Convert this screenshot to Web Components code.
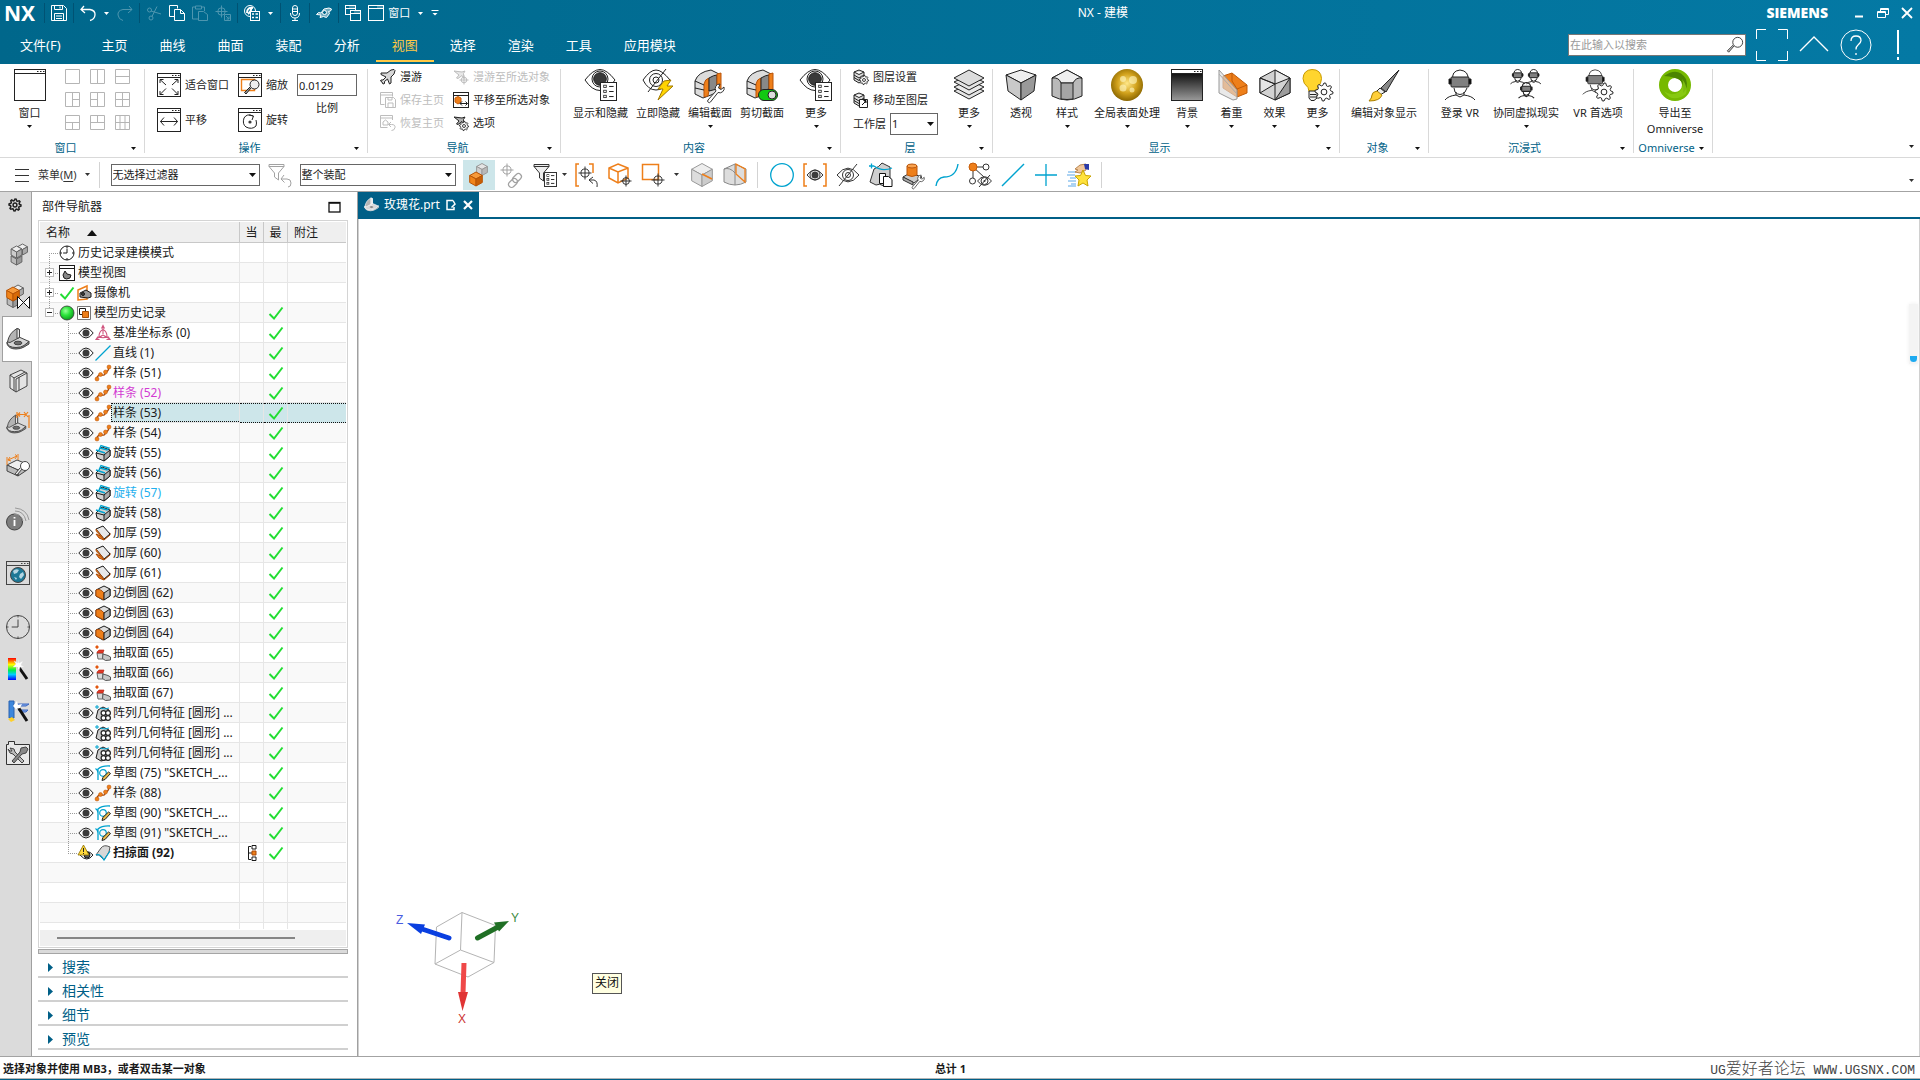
<!DOCTYPE html>
<html lang="zh-CN">
<head>
<meta charset="utf-8">
<title>NX - 建模</title>
<style>
html,body{margin:0;height:100%}
body{font:11px/16px "Noto Sans","Noto Sans CJK SC",sans-serif;color:#1a1a1a;background:#fff;overflow:hidden}
</style>
</head>
<body>
<nx-app></nx-app>
<script>
/* ---------- icon library: name -> [viewBox size, markup] ---------- */
const K='#3c3c3c', O='#ee7f1a', C='#00a3cf';
function gear(cx,cy,r,n=8,extra=''){
  let d='';
  for(let i=0;i<n*4;i++){
    const a=(i-.5)*Math.PI*2/(n*4)+Math.PI/n/4, q=(i%4<2)?r:r*.74;
    d+=(i?'L':'M')+(cx+q*Math.cos(a)).toFixed(2)+' '+(cy+q*Math.sin(a)).toFixed(2);
  }
  return `<path d="${d}Z" fill="#fff" ${extra}/><circle cx="${cx}" cy="${cy}" r="${r*.32}" fill="none" ${extra}/>`;
}
const eye=(x,y,w,r,p)=>`<path d="M${x-w} ${y}Q${x} ${y-w*1.25} ${x+w} ${y}Q${x} ${y+w*1.25} ${x-w} ${y}Z" fill="#fff"/><circle cx="${x}" cy="${y}" r="${r}" fill="none"/><circle cx="${x}" cy="${y}" r="${p}" fill="${K}" stroke="none"/>`;
const list=(x,y,w,h)=>`<rect x="${x}" y="${y}" width="${w}" height="${h}" fill="#fff"/>`+[0,1,2].map(i=>{const q=y+h*(.22+i*.28);return `<rect x="${x+w*.2}" y="${q-h*.07}" width="${w*.16}" height="${h*.13}" fill="none" stroke-width=".8"/><path d="M${x+w*.54} ${q}h${w*.28}"/>`}).join('');
const cube=(x,y,w,t='#ededed',l='#c6c6c6',r='#9f9f9f',s='#555')=>`<g stroke="${s}" stroke-linejoin="round"><path d="M${x} ${y-w}L${x+w*.9} ${y-w*.5}L${x} ${y}L${x-w*.9} ${y-w*.5}Z" fill="${t}"/><path d="M${x-w*.9} ${y-w*.5}L${x} ${y}V${y+w}L${x-w*.9} ${y+w*.5}Z" fill="${l}"/><path d="M${x+w*.9} ${y-w*.5}L${x} ${y}V${y+w}L${x+w*.9} ${y+w*.5}Z" fill="${r}"/></g>`;
const frame=(s)=>`<rect x=".5" y=".5" width="${s-1}" height="${s-1}" fill="#fff"/><path d="M0 4.5H${s}"/><path d="M${s-9} 2.5h1.5m1.5 0h1.5m1.5 0h1.5"/>`;
const cross=(x,y,r)=>`<circle cx="${x}" cy="${y}" r="${r*.62}" fill="none"/><path d="M${x-r} ${y}h${r*2}M${x} ${y-r}v${r*2}" fill="none"/>`;
const plane=`<path d="M1 4h6l4-3 3-.5 1 1L14 5l-3 3v6l-1.500 1-2-5-3 2.500v2L3 15l-1-2-1.500-1 .5-1h2L6 8 1 5.500Z" fill="currentColor" fill-opacity=".18"/>`;
const plane2=`<path d="M1 2l8 1 3-1-1.500 2.500.5 5-2-3-4 3-1.500-.5L6 6Z" fill="currentColor" fill-opacity=".35"/>`;
const wrench=`<path d="M14 31l8-9a4.500 4.500 0 0 1 4-7l-1.500 4 2.500 1.500 3-2.500a4.500 4.500 0 0 1-6 5.500l-7.500 9.500a1.600 1.600 0 0 1-2.500-2Z" fill="#fff" stroke="#333"/>`;
const section=`<path d="M1 12Q4 3 17 1l8 4v17l-8 4-8 3-8-4Z" fill="#dcdcdc"/><path d="M10 28V15q1-5 5-6v12l-1 6Z" fill="${O}" stroke="#b9550a"/><path d="M15 9q5-3 8-3v14l-8 2Z" fill="#888"/><path d="M23 5l4-1v16l-4 3Z" fill="${O}" stroke="#b9550a"/><path d="M1 12l9 4m-9 3l9 2" fill="none"/>`;
const flange=`<path d="M1 15v2q2 5 9 5 5 0 8-2l5-3v-3l-5 4q-8 5-14 0Z" fill="#8a8a8a"/><path d="M3 14L13 10l10 4.500-5 4q-3 2-8 2-8 0-9-5Z" fill="#d6d6d6"/><path d="M1.500 15Q3 6 11 1.500l2.500 1V10.500L4 15.500Z" fill="#b4b4b4"/><path d="M11 1.500l2.500 1V10.500L11 11.500Z" fill="#e4e4e4"/><ellipse cx="12" cy="16" rx="4" ry="1.800" fill="#6d6d6d"/>`;
const vr=`<path d="M9 11Q7 2 16 1q9 1 8 10" fill="none"/><path d="M10 19l1 4q5 5 10 0l2-4" fill="none"/><path d="M12 23v3q-8 1-11 5M20 23v3q8 1 11 5M12 26l4 2 4-2" fill="none"/><rect x="7" y="8" width="18" height="10" rx="1" fill="#808080"/><path d="M5 10h2v5H5zM25 10h2v5h-2z"/>`;
const clockF=(c,r)=>`<circle cx="${c}" cy="${c}" r="${r}" fill="none"/><path d="M${c} ${c-r*.65}V${c}H${c-r*.55}" fill="none"/><path d="M${c} ${c-r}v2M${c} ${c+r}v-2M${c-r} ${c}h2M${c+r} ${c}h-2"/>`;
const winS=(x,y,w,h)=>`<rect x="${x}" y="${y}" width="${w}" height="${h}" fill="none"/><path d="M${x} ${y+3}h${w}"/><path d="M${x+w-6} ${y+1.500}h1m1 0h1m1 0h1"/>`;
const stack=`<path d="M16 15l15 7-15 8-15-8z" fill="#e4e4e4"/><path d="M16 11l15 7-15 8-15-8z" fill="#e9e9e9"/><path d="M16 6l15 7-15 8-15-8z" fill="#e4e4e4"/><path d="M16 1l15 8-15 8L1 9z" fill="#dcdcdc"/>`;
const stackS=`<path d="M6 1l5 2-5 2.500L1 3zM1 3v8l5 3 5-3V3M1 6l5 3 5-3M1 8.500l5 3 5-3" fill="#ddd"/>`;
const chain=`<g fill="none" stroke-width="1.200"><rect x="12" y="12" width="10" height="6" rx="3" transform="rotate(-45 17 15)"/><rect x="8" y="17" width="10" height="6" rx="3" transform="rotate(-45 13 20)"/></g>`;
const rolled=`<path d="M1 19L5 6q5-2 8-6l8 4v13l-6 6q-5-3-8-1Z" fill="#cfcfcf"/>`;
const I={
save:[16,`<path d="M.5.500h12l3 3v12H.5zM3.500.500v4h8v-4M3.500 15.500v-7h9v7M5 11h6M5 13.500h6M9 1.500v2" fill="none"/>`],
undo:[16,`<path d="M4 1L1 4.500 5 8M1 4.500h9q5.500 1 5 5.500T10 15.500" fill="none" stroke-width="1.300"/>`],
redo:[16,`<path d="M12 1l3 3.500L11 8M15 4.500H6Q.5 5.500 1 10t5 5.500" fill="none"/>`],
cut:[16,`<circle cx="3.500" cy="5" r="2" fill="none"/><circle cx="5" cy="13" r="2" fill="none"/><path d="M5 6l10 3M6 11.500l5-10" fill="none"/>`],
copy:[16,`<path d="M.5.500h8v3M.5.500v11h5M5.500 4.500h6l4 4v7h-10zM11.500 4.500v4h4" fill="none"/>`],
paste:[16,`<path d="M3 2H.5v12H6M10 2h2.500v4M3.500 1h6v3h-6zM6.500 6.500h5l4 3v6h-9z" fill="none"/>`],
move:[16,`${cross(6.5,6.5,6)}<path d="M9.500 9.500h6v6h-6zM11 11l3 3m0-2.500V14h-2.500" fill="none"/>`],
disp:[16,`<circle cx="6" cy="6" r="5.500" fill="none"/><path d="M3 8q0-6 6-5M4 9q4-3 3-7" fill="none" stroke-width="2"/><rect x="6.500" y="6.500" width="9" height="9" fill="#00678b"/><path d="M8 9h2M8 12.500h2M11.500 9H14M11.500 12.500H14" stroke-width="1.500"/>`],
mic:[16,`<rect x="5.500" y=".5" width="5" height="10" rx="2.500" fill="none"/><path d="M6 4h4M6 6.500h4M3.500 8q0 5 4.500 5t4.500-5M8 13v2.500M5 15.500h6" fill="none"/>`],
hand:[16,`<path d="M.5 9.500l2-2 2.500.5 3-4 5-1 2.500 1-1 2-2 .5 1 2-3 4-3-1-3.500 1 1-2.500z" fill="currentColor" fill-opacity=".45"/><circle cx="8.500" cy="7.500" r="2" fill="#00678b"/>`],
wins:[16,`${winS(.5,.5,10,9)}<rect x="5.500" y="5.500" width="10" height="10" fill="#00678b"/>${winS(5.5,5.5,10,10)}`],
win:[16,`${winS(.5,.5,15,15)}`],
cust:[8,`<path d="M.5 1.500h7"/><path d="M1.500 4h5L4 6.500z" fill="currentColor" stroke="none"/>`],
min:[14,`<path d="M3 10.500h8" stroke-width="2"/>`],
restore:[14,`<path d="M4.500 5V2.500h8v6H10M1.500 5.500h8v6h-8zM1.500 6.500h8M4.500 3.500h8" fill="none"/>`],
close:[14,`<path d="M2 2l10 10M12 2L2 12" stroke-width="1.800"/>`],
brackets:[32,`<path d="M10 .5H.5V10M22 .5h9.500V10M.5 22v9.500H10M31.500 22v9.500H22" fill="none"/>`],
chevup:[32,`<path d="M2 22L16 8l14 14" fill="none" stroke-width="1.400"/>`],
help:[32,`<circle cx="16" cy="16" r="15" fill="none"/><path d="M11 12q0-5 5-5t5 4.500q0 2-3 4.500-2 1.500-2 4.500M16 24v2" fill="none" stroke-width="1.300"/>`],
bang:[32,`<path d="M16 1v24M16 28v3" stroke-width="2"/>`],
mag:[20,`<circle cx="13" cy="7" r="5.500" fill="none"/><path d="M9 11l-6 7-1.500-1.500L8 10" fill="#ccc"/>`],
bigwin:[32,`<rect x=".5" y=".5" width="31" height="31" fill="#fff"/><path d="M0 4.500h32M23 2.500h1.500m1.500 0h1.500m1.500 0h1.500"/>`],
fit:[24,`${frame(24)}<path d="M9 12L3 6.500v3.500m0-3.500h3.500M15 12l6-5.500V10m0-3.500h-3.500M9 15.500L3 21.500V18m0 3.500h3.500M15 15.500l6 6V18m0 3.500h-3.500" fill="none"/>`],
zoom:[24,`${frame(24)}<path d="M3.500 6.500h13v11h-13z" fill="none" stroke="${O}" stroke-width="1.400"/><circle cx="16.500" cy="11.500" r="4.500" fill="#eee"/><path d="M13 15l-5 6-1.500-1.500L12 14" fill="#999"/>`],
pan:[24,`${frame(24)}<path d="M3.500 13.500h17M7 9.500l-3.500 4L7 17.500M17 9.500l3.500 4-3.500 4" fill="none"/>`],
rot:[24,`${frame(24)}<path d="M15 8q-6-3-9 2-2 6 2 9 6 3 10-1 1-3 0-6M11 7l4.500 1L14 12" fill="none"/><circle cx="12" cy="14" r="1.600" fill="${K}" stroke="none"/>`],
plane:[16,plane],
planesel:[16,plane2+cross(11,11,4.5)],
saveview:[16,`<path d="M.5.500h12v4M.5.500v12h4M.5 3h12M5.500 5.500h8l2 2v8h-10zM8 15v-4h5v4M8 5.500v2.500h4V5.500" fill="none"/>`],
restview:[16,`<path d="M12.500 5V.500H.5v12h7M.5 3h12M3 10V7l2.500-2L8 7v3zM11 7L8.500 9.500 11 12M8.500 9.500h3q4 0 3.500 3t-3.500 3" fill="none"/>`],
pansel:[16,`<rect x=".5" y=".5" width="15" height="15" fill="#fff"/><path d="M0 3.500h16"/><path d="M5 4.500l3 1.500v4l-3 2-3-2V6z" fill="${O}" stroke="#c75d0a"/><path d="M7 11.500h7.500M9 9.500l-2 2 2 2M12.500 9.500l2 2-2 2" fill="none"/>`],
navopt:[16,plane2+gear(11,11,4.6,8,'stroke-width=".9"')],
showhide:[32,`<path d="M0 11Q8 .5 15 .5T30 11Q23 21.500 15 21.500T0 11Z" fill="#fff"/><circle cx="15" cy="10" r="8" fill="none"/><circle cx="15" cy="10" r="6.300" fill="#3a3a3a"/>${list(15.5,13.5,16,18)}`],
hidebolt:[32,`<path d="M1 11Q8 1 14 1t14 10Q22 21 14 21T1 11Z" fill="#fff"/><circle cx="14" cy="11" r="6.500" fill="none"/><circle cx="14" cy="11" r="3" fill="none"/><path d="M24 0L6 23"/><path d="M22 12l7-1-4 6h6L16 31l5-11h-5z" fill="#ffd400" stroke="#a07800"/>`],
editsec:[32,section+wrench],
clipsec:[32,section+`<rect x="12.500" y="20.500" width="19" height="11" rx="5.500" fill="#12c812" stroke="#222"/><circle cx="26" cy="26" r="4" fill="#ddd" stroke="#222"/>`],
layerset:[16,stackS+gear(11,11,4.6,8,'stroke-width=".9"')],
layermove:[16,stackS+`<path d="M6.500 7.500h8v8h-8z" fill="#fff"/><path d="M9 13l4-4m-2.500-.5H13V11" stroke="#111"/>`],
layers:[32,stack],
persp:[32,`<path d="M16 1l15 5-15 8L1 6z" fill="#efefef"/><path d="M1 6l15 8v17L3 22z" fill="#c9c9c9"/><path d="M31 6l-15 8v17l13-9z" fill="#999"/>`],
style:[32,`<path d="M1 9L16 1l15 8v18q-15 8-30 0z" fill="#b9b9b9"/><path d="M1 9L16 1l15 8q-6-1-9 5H10Q8 8 1 9z" fill="#efefef"/><path d="M10 14v16q6 1 12 0V14z" fill="#a5a5a5"/>`],
gold:[32,`<defs><radialGradient id="g" cx=".5" cy=".45" r=".55"><stop offset="0" stop-color="#ffe88a"/><stop offset=".55" stop-color="#d2a21c"/><stop offset="1" stop-color="#8a6600"/></radialGradient></defs><circle cx="16" cy="16" r="16" fill="url(#g)" stroke="none"/><g fill="#fff5bb" stroke="none" opacity=".65"><circle cx="12" cy="10" r="3"/><circle cx="22" cy="11" r="4"/><circle cx="12" cy="19" r="3.500"/><circle cx="21" cy="21" r="2.500"/></g>`],
bg:[32,`<defs><linearGradient id="g" x2="0" y2="1"><stop offset="0" stop-color="#111"/><stop offset="1" stop-color="#9a9a9a"/></linearGradient></defs><rect x=".5" y=".5" width="31" height="31" fill="#fff"/><rect x=".5" y="4.500" width="31" height="27" fill="url(#g)"/><path d="M23 2.500h1.500m1.500 0h1.500m1.500 0h1.500"/>`],
emph:[32,`<path d="M7 7l9-3 15 12v8l-10 4L7 19z" fill="${O}" stroke="#bf5a08"/><path d="M16 4v8l5 8 10-4M21 20v8" fill="none" stroke="#bf5a08"/><path d="M3 1l18 20v9l-4 1L3 24z" fill="#ddd" fill-opacity=".65" stroke="#999"/><path d="M3 5l18 20" stroke="#aaa"/>`],
effect:[32,`<path d="M16 1l15 8v15l-15 7-15-7V9z" fill="#d2d2d2"/><path d="M16 1v14l15-6zM16 15L1 24V9z" fill="#e6e6e6"/><path d="M31 9v15l-15 7z" fill="#9d9d9d"/><path d="M16 15L1 9M16 31V15" fill="none"/>`],
bulb:[32,`<path d="M10 .5q9 0 9.500 9 0 5-4 9l-1 4H7l-1-4q-5-4-5-9 .5-8.500 9-9z" fill="#ffd52e" stroke="#c99a00"/><path d="M7 22h8v7l-3 2.500H9L7 29zM8 25.500h6M8 28h6" fill="#eee"/>${gear(22,23,9,8)}`],
brush:[32,`<path d="M31 1L18 23l-5-4z" fill="#888"/><path d="M12 19l5 4-5 3-4-3z" fill="#eee"/><path d="M9 22l5 4q-2 6-13 6 3-3 3-6t5-4z" fill="#ffcf3a" stroke="#a87e00"/>`],
vr:[32,vr],
vrs:[32,`<g transform="scale(.48)" stroke-width="2">${vr}</g><g transform="translate(16) scale(.48)" stroke-width="2">${vr}</g><g transform="translate(8 13) scale(.52)" stroke-width="2">${vr}</g>`],
vrgear:[32,`<g transform="scale(.82)">${vr}</g>${gear(22,23,9,8)}`],
omni:[32,`<circle cx="16" cy="16" r="11.500" fill="none" stroke="#76b900" stroke-width="9"/><path d="M5 7q14-10 22 3 3 9-3 14 2-13-8-15-6-2-11-2z" fill="#4c8500" stroke="none"/><path d="M27 25q-14 10-22-3 7 6 15 1 6-5 3-13 6 7 4 15z" fill="#8fd016" stroke="none" opacity=".7"/>`],
burger:[16,`<path d="M1 2.500h14M1 8.500h14M1 14.500h14"/>`],
filtundo:[24,`<path d="M1 1.500h15v2L10.500 10v7l-4-3v-4L1 3.500zM1 3.500h15M16 12l-3 4 3.500 3.500M13 16h6q4 0 4 4t-3 4" fill="none"/>`],
asm:[24,`${cube(15,6.500,6,'#e4e4e4','#cfcfcf','#b9b9b9','#999')}${cube(9,16,7,'#f79a3a','#f08419','#c85f05','#b85406')}`],
link:[24,cross(7,7,6.5)+chain],
filtlist:[24,`<path d="M1 1.500h15v2L10.500 10v8l-4-3v-5L1 3.500zM1 3.500h15" fill="#eee"/>${list(11.5,9.5,12,14)}`],
selundo:[24,`<path d="M4 1H1v22h3M14 1h4v9" fill="none" stroke="${O}" stroke-width="1.500"/>${cross(10,10,6.5)}<path d="M18 14l-4 3 4 3.500M14 17h5q4 1 3 7" fill="none"/>`],
cubesel:[24,`<path d="M10 1l10 4v10l-10 5L1 15V5zM1 5l9 4 10-4M10 9v11" fill="none" stroke="${O}" stroke-width="1.500"/>${cross(18,18,5.5)}`],
rectsel:[24,`<path d="M1.500 1.500h16v15h-16z" fill="none" stroke="${O}" stroke-width="1.500"/>${cross(17,17,6.5)}`],
cubea:[24,cube(12,12,11.500,'#eee','#ddd','#ccc','#999')+`<path d="M12 11l10 5" stroke="${O}" stroke-width="1.700"/>`],
cubeb:[24,`<path d="M1 6L12 1l11 5v13q-11 6-22 0z" fill="#ddd" stroke="#888"/><path d="M1 6q6-2 11 4v12M12 10V1" fill="none" stroke="#888"/><path d="M13 1v10l9 8V6z" fill="none" stroke="${O}" stroke-width="1.300"/>`],
circle:[24,`<circle cx="12" cy="12" r="11.300" fill="none" stroke="${C}" stroke-width="1.300"/>`],
eyebr:[24,`<path d="M4 1H1v22h3M20 1h3v22h-3" fill="none" stroke="${O}" stroke-width="1.500"/>${eye(12,12,8,5,3.500)}`],
eyeoff:[24,`${eye(12,12,11,5.500,0)}<circle cx="12" cy="12" r="2.500" fill="none"/><path d="M21 1L3 23"/>`],
rollcopy:[24,rolled+`<path d="M5 3q8 6 18 2M0 3h5M2.500.500v5" fill="none" stroke="${C}" stroke-width="1.300"/><path d="M10.500 10.500h6v10h-6z" fill="#fff" stroke="#111"/><path d="M14.500 13.500h5l3.500 3v7h-8.500z" fill="#fff" stroke="#111"/>`],
cylwr:[24,`<path d="M1 14l7-4 12 4-8 6z" fill="#ccc"/><path d="M1 14v3l10 5v-3z" fill="#aaa"/><path d="M5 3v9q5 3 10 0V3z" fill="${O}" stroke="#b9550a"/><ellipse cx="10" cy="3" rx="5" ry="2" fill="#f9a24e" stroke="#b9550a"/><g transform="translate(0 1) scale(.74)">${wrench}</g>`],
curve:[24,`<path d="M1 23q1-8 8-9 12 0 14-13" fill="none" stroke="${C}" stroke-width="1.400"/>`],
treehide:[24,`<path d="M5 4l11 10M5 4h13M5 4v13" fill="none"/><circle cx="5" cy="4" r="4" fill="${O}" stroke="#c75d0a"/><circle cx="18" cy="4" r="3" fill="#fff"/><circle cx="4.500" cy="18" r="3" fill="#fff"/>${eye(16.500,18,7,3.500,1)}<path d="M22 12L11 24"/>`],
line:[24,`<path d="M23 1L1 23" stroke="${C}" stroke-width="1.400"/>`],
plus:[24,`<path d="M12 1v22M1 12h22" stroke="${C}" stroke-width="1.300"/>`],
star:[24,`<path d="M1 9h8M0 12h8M3 15h6M1 18h8M4 21h5M1 23h8" stroke="#5aa7e8"/><path d="M8 6l5-4 6-1v6l-6 3-5-1 3-2z" fill="#f1c79a" stroke="#b98650"/><path d="M17 1l5 0v6l-4-1z" fill="#2a3aa8" stroke="none"/><path d="M16 7l2.500 5.500 5.500.5-4 4 1 6-5-3-5 3 1-6-4-4 5.500-.5z" fill="#ffe23c" stroke="#c9a400"/>`],
gear:[14,`${gear(7,7,6,8,'stroke="#222" stroke-width="1.500"').replace('fill="#fff"','fill="none"')}`],
rasm:[24,cube(16.500,6.500,5.500,'#eee','#ccc','#aaa','#666')+cube(10.500,16,6,'#ddd','#bbb','#999','#666')+cube(10.500,9,6,'#eee','#ccc','#aaa','#666')],
rcon:[24,cube(12,6,6,'#eee','#ccc','#aaa','#666')+cube(7,16,6.500,'#ddd','#bbb','#999','#666')+cube(7,9,7,'#f79a3a','#f08419','#d86a08','#b85406')+`<path d="M11.500 11.500v12l12-12v12z" fill="#fff" stroke="#111"/>`],
flange:[24,flange],
books:[24,`<path d="M4 6l11-5 6 3v13L10 23l-6-4z" fill="#e4e4e4"/><path d="M4 6l4 3v13M10 10v13M8 9l11-6M10 10l11-6M13 8v13" fill="none"/>`],
rpmi:[24,`<g transform="translate(0 3) scale(.86)">${flange}</g><path d="M11 1v6M23 4v13M12 3.500h8M14 1.500l-2 2 2 2M18 1l4 5M22 1l-4 5" fill="none" stroke="${O}" stroke-width="1.200"/>`],
rmeas:[24,`<path d="M1 12l10-5 10 4-9 6z" fill="#eee"/><path d="M1 12v6l11 5v-6zM21 11v6l-9 6v-6z" fill="#bbb"/><path d="M1 4v8M12 1v6M2 7l9-4M4 4L2 7l3 1M9 1.500l2 1.500-2 3" fill="none" stroke="${O}"/><circle cx="19" cy="13" r="4.500" fill="#fff"/><path d="M16 16l-5 6-2-1 5-6" fill="#eee"/>`],
rinfo:[24,`<circle cx="8.500" cy="15" r="8" fill="#7d7d7d"/><path d="M8.500 13v6M8.500 10v1.500" stroke="#fff" stroke-width="1.800"/><path d="M9 4q9 0 11 10M9 1q12 1 14 12M8 7q7 0 9 7" fill="none" stroke="#999"/>`],
rweb:[24,`${frame(24).replace('fill="#fff"','fill="none"')}<circle cx="12" cy="14" r="7.500" fill="#1d7896"/><path d="M7 10q3-3 6-1l-2 3-3 1zM14 13l3-2 1 3-3 4-2-2zM8 16l3 1-1 2z" fill="#b5d6e2" stroke="none"/>`],
clock:[24,clockF(12,11.500)],
rwand:[24,`<defs><linearGradient id="g" x2="0" y2="1"><stop offset="0" stop-color="#f00"/><stop offset=".3" stop-color="#ff0"/><stop offset=".55" stop-color="#0e4"/><stop offset=".75" stop-color="#0cf"/><stop offset="1" stop-color="#00f"/></linearGradient></defs><rect x="2" y="1" width="8" height="22" fill="url(#g)" stroke="none"/><path d="M12 9l9 13" stroke="#111" stroke-width="3"/><path d="M12 2l1 4 4-2-2 4 3 2-4 0-1 4-2-4-4 0 3-3-2-3 4 2z" fill="#fff" stroke="#ddd" stroke-width=".4"/>`],
rwand2:[24,`<path d="M3 2h5v17H3z" fill="#3d87dc" stroke="#2a62b0"/><path d="M10 5h13l-3 2h-7M12 11h10l-2 2h-6" fill="#7fa8ea" stroke="#3d66c0"/><path d="M2 20l4-2 3 3-4 2z" fill="#ffd02a" stroke="none"/><path d="M12 8l9 14" stroke="#111" stroke-width="3"/><path d="M11 2l1 4 4-1-2 4-4 1-3-3z" fill="#fff" stroke="none"/>`],
rtools:[24,`<path d="M.5 3.500h2v-3h6v3h15v20H.5z" fill="#e8e8e8" stroke="#333"/><path d="M4 7l4 1 1 3 9 9-2 2-9-9-3-1-2-4 2 2h2z" fill="#bbb"/><path d="M20 6l-5 1-1 4-8 9 2 2 8-9 4-1 2-4z" fill="#888"/>`],
tclock:[16,clockF(8,7)],
tview:[16,`<rect x=".5" y=".5" width="15" height="15" fill="#fff"/><path d="M0 3.500h16"/><path d="M4 10l2-4 2 3 4 1-1 3q-4 2-6 0z" fill="#888"/>`],
tcam:[16,`<path d="M2 5l9-4v13l-9 1z" fill="none" stroke="${O}" stroke-width="1.500"/><path d="M4 8l6-3 5 3v4l-3 1-8-1z" fill="#999"/><circle cx="7" cy="9" r="1.500" fill="#444"/>`],
tcheck:[16,`<path d="M1.500 9l4.500 4.500L14.500 2.500" fill="none" stroke="#22dd33" stroke-width="2"/>`],
tball:[16,`<defs><radialGradient id="g" cx=".4" cy=".35" r=".65"><stop offset="0" stop-color="#9f9"/><stop offset=".5" stop-color="#2be33a"/><stop offset="1" stop-color="#0fa01f"/></radialGradient></defs><circle cx="8" cy="8" r="7" fill="url(#g)" stroke="#333" stroke-width=".8"/>`],
thist:[16,`<path d="M1.500 1.500h13v13h-13z" fill="#fff" stroke="#777"/><path d="M3.500 3.500h6v6h-6z" fill="#fff"/><path d="M6.500 6.500h6v6h-6z" fill="${O}" stroke="#a74d04"/>`],
eye:[16,`<path d="M.8 8Q8-2 15.200 8 8 18 .8 8Z" fill="#fff"/><circle cx="8" cy="8" r="3.500" fill="#3a3a3a" stroke="none"/>`],
tcsys:[16,`<path d="M8 1v8M8 10L2 13.500M8 10l6 3.500M6.500 3.500L8 .5l1.500 3M3 11.500l-2 3h3.500M13 11.500l2 3h-3.500M8 4.500q4 2 4 7-4 2.500-8 0 0-5 4-7" fill="none" stroke="#d0557f" stroke-width="1.100"/>`],
tline:[16,`<path d="M15.500.5L.5 15.500" stroke="${C}" stroke-width="1.300"/>`],
tspl:[16,`<path d="M2 14q0-4 4-4 5 1 4-3 4 0 4-6" fill="none" stroke="#a8480a" stroke-width="1.300"/><g fill="${O}" stroke="#b9550a" stroke-width=".5"><circle cx="2" cy="14" r="2"/><circle cx="5.500" cy="9.500" r="2"/><circle cx="10.500" cy="7" r="2"/><circle cx="14" cy="2" r="2"/></g>`],
trev:[16,`<path d="M1 8l6-6 8 3v6l-6 5-7-3z" fill="#d2d2d2"/><path d="M9 16V10l6-5v6z" fill="#a9a9a9"/><path d="M9 10L1 8" fill="none"/><path d="M4 5l2-4.500 8 2.500-2 2-7-2M1 5l9 3" fill="none" stroke="${C}" stroke-width="1.400"/>`],
tthk:[16,`<path d="M1 9l3 4 5 2 6-5 0-2-7 4z" fill="#e87a1e" stroke="#a84906"/><path d="M1 4l7-3 7 8-6 5z" fill="#e8e8e8"/><path d="M1 4l8 10v1L1 6z" fill="#e87a1e" stroke="#a84906" stroke-width=".7"/>`],
tblend:[16,`<path d="M1 5l8-4 6 3v7l-7 4-7-4z" fill="#ddd"/><path d="M1 5q4-2 8 3v7l-8-4z" fill="${O}" stroke="#a84906"/><path d="M9 8l6-4v7l-6 4z" fill="#b5b5b5"/>`],
text:[16,`<path d="M2 8h6v6H3z" fill="#d8d8d8" stroke="#666"/><path d="M8 9l5 1.500 2.500 1.500v3l-5 .5-3-2z" fill="#c6c6c6" stroke="#555"/><path d="M2 7l2-2h5l-1 3H2z" fill="#e03a2a" stroke="#b5220f" stroke-width=".6"/><path d="M2 4V1M.5 2.500L2 .8l1.500 1.700" fill="none" stroke="#e2570f" stroke-width="1.200"/>`],
tpat:[16,`<path d="M1 13L3 5l5-3 6 3v9l-8 2z" fill="#ccc"/><path d="M0 2h4M2 0v4M5 3q5 2 9 0" fill="none" stroke="${C}"/><g fill="#fff" stroke="#222" stroke-width="1.200"><circle cx="8.500" cy="8" r="2.400"/><circle cx="13" cy="8" r="2.400"/><circle cx="8.500" cy="13" r="2.400"/><circle cx="13" cy="13" r="2.400"/></g>`],
tsk:[16,`<path d="M3 15V4Q7 .5 15 1M.5 3.500Q3 5 3 8" fill="none" stroke="${C}" stroke-width="1.300"/><circle cx="8" cy="8" r="3.300" fill="none" stroke="${C}" stroke-width="1.200"/><path d="M13.500 7l2 1.500-5.500 6-3 1 .8-3z" fill="#e9b949" stroke="#222"/>`],
tsweep:[16,`<path d="M1 10L6 3q3-4 9-1l-1 5-5 8-3-3q-2-3-5-2z" fill="#d8d8d8" stroke="#555"/><path d="M1 10q4-2 8 5l6-9" fill="none" stroke="${C}" stroke-width="1.200"/>`],
teyewarn:[16,`<path d="M2 10q7-7 13 0-6 8-13 0z" fill="#fff"/><circle cx="9" cy="10" r="3" fill="#555"/><path d="M5.500 0L11 10H0z" fill="#ffd83a" stroke="#8a6d00" stroke-width=".8"/><path d="M5.500 3v4M5.500 8v1" stroke="#222"/>`],
tdep:[16,`<path d="M7 1.500H4.500v13H7M4.500 8H8" fill="none"/><path d="M8 .5h4v3.500H8zM8 12h4v3.500H8z" fill="none"/><path d="M8 6h4v4H8z" fill="${O}" stroke="#a84906"/>`],
square:[16,`<rect x="2" y="3.500" width="11" height="9.500" fill="none" stroke="#111" stroke-width="1.300"/><path d="M2 4h11" stroke="#111" stroke-width="1.500"/>`],
tabdoc:[12,`<path d="M8 1.500H2v9h7V8M8 1.500L10 5 6.500 8.500" fill="none" stroke-width="1.500"/>`],
tabx:[12,`<path d="M2 2l8 8M10 2l-8 8" stroke-width="2.200"/>`]
};
['','M7.500 0v15','M0 7.500h15','M7.500 0v15M7.500 7.500H15','M7.500 0v15M0 7.500h7.500','M7.500 0v15M0 7.500h15','M0 7.500h15M7.500 7.500V15','M0 7.500h15M7.500 0v7.500','M5 0v15M10 0v15M0 7.500h15'].forEach((d,i)=>I['w'+i]=[15,`<path d="M.5.500h14v14H.5z${d}" fill="none" stroke="#b5b5b5"/>`]);

/* ---------- base class ---------- */
const RESET=`*{box-sizing:border-box}button{font:inherit;color:inherit;background:none;border:0;padding:0;margin:0;cursor:default}ul{list-style:none;margin:0;padding:0}`;
class Nx extends HTMLElement{
  connectedCallback(){
    if(this.shadowRoot)return;
    const t=document.createElement('template');
    t.innerHTML=`<style>${RESET}${this.css()}</style>${this.html()}`;
    this.attachShadow({mode:'open'}).append(t.content.cloneNode(true));
  }
  a(n,d=''){return this.getAttribute(n)??d}
  css(){return ':host{display:block}'}
  html(){return '<slot></slot>'}
}
const def=(n,c)=>customElements.define(n,c);
const ic=(n,s='')=>`<nx-icon name="${n}"${s?` size="${s}"`:''}></nx-icon>`;

def('nx-icon',class extends Nx{
  css(){return `:host{display:block;flex:none;line-height:0}svg{display:block;overflow:visible}`}
  html(){const [v,m]=I[this.a('name')];const s=this.a('size',v);return `<svg width="${s}" height="${s}" viewBox="0 0 ${v} ${v}" stroke="currentColor" stroke-width="1" aria-hidden="true">${m}</svg>`}
});
def('nx-caret',class extends Nx{
  css(){return `:host{display:block;flex:none;width:5px;height:3px}svg{display:block}:host([big]){width:7px;height:4px}`}
  html(){return `<svg width="100%" height="100%" viewBox="0 0 5 3" preserveAspectRatio="none"><path d="M0 0h5L2.500 3z" fill="currentColor"/></svg>`}
});
def('nx-combo',class extends Nx{
  css(){return `:host{display:grid;width:var(--combo-w);height:22px;align-items:center}
  select{grid-area:1/1;appearance:none;width:100%;height:22px;border:1px solid #666;border-radius:0;background:#fff;font:inherit;color:inherit;padding:0 16px 0 1px;margin:0}
  nx-caret{grid-area:1/1;justify-self:end;margin-right:4px;pointer-events:none;color:#111}`}
  html(){return `<select aria-label="${this.a('label')}"><option>${this.a('value')}</option></select><nx-caret big></nx-caret>`}
});

/* ---------- header ---------- */
def('nx-header',class extends Nx{
  css(){return `:host{display:block;color:#fff;background:linear-gradient(90deg,#00678b,#0479a4)}
  .bar{display:flex;align-items:center;height:26px}
  .quick{display:flex;align-items:center;gap:7px;padding-left:4px}
  .quick nx-caret{margin:0 1px}
  b{font-size:21px;line-height:26px;margin-right:3px}
  i{width:1px;height:20px;background:#005273;margin:0 -1px}
  .dim{opacity:.3}
  .quick span{display:flex;gap:4px;align-items:center}
  h1{flex:1;font-size:12px;font-weight:400;text-align:center;margin:0}
  strong{font:800 14px/20px "Open Sans","Noto Sans",sans-serif}
  .wc{display:flex;gap:10px;padding:0 6px 0 24px}
  .row{display:flex;height:38px;align-items:stretch}
  nav{display:flex;flex:1;font-size:13px}
  nav a{display:flex;align-items:center;padding:0 16px;color:#fff;text-decoration:none}
  nav a:first-child{padding:0 25px 0 20px}
  nav .on{color:#ffc845;box-shadow:inset 0 -2px #00688c,inset 0 -4px #ffc845}
  .r{display:flex;align-items:center;gap:10px;padding-right:6px}
  .s{display:flex;align-items:center;width:178px;height:22px;background:#fff;border:1px solid #777;color:#333;padding-right:1px}
  input{flex:1;min-width:0;border:0;padding:0 1px;font:inherit;outline:0;background:none}
  input::placeholder{color:#9a9a9a;opacity:1}`}
  html(){const q=(n,l,c='')=>`<button aria-label="${l}" class="${c}">${ic(n)}</button>`;
  return `<div class="bar"><div class="quick"><b>NX</b><i></i>${q('save','保存')}<i></i>${q('undo','撤消')}<nx-caret></nx-caret>${q('redo','重做','dim')}<i></i>${q('cut','剪切','dim')}${q('copy','复制')}${q('paste','粘贴','dim')}${q('move','移动','dim')}<i></i>${q('disp','显示')}<nx-caret></nx-caret><i></i>${q('mic','语音')}<i></i>${q('hand','触控')}<i></i>${q('wins','切换窗口')}<button><span>${ic('win')}窗口</span></button><nx-caret></nx-caret>${q('cust','自定义')}</div>
  <h1>NX - 建模</h1><strong>SIEMENS</strong><div class="wc">${q('min','最小化')}${q('restore','还原')}${q('close','关闭')}</div></div>
  <div class="row"><nav>${'文件(F) 主页 曲线 曲面 装配 分析 视图 选择 渲染 工具 应用模块'.split(' ').map(t=>`<a href="#"${t==='视图'?' class="on" aria-current="page"':''}>${t}</a>`).join('')}</nav>
  <div class="r"><div class="s"><input type="search" aria-label="搜索" placeholder="在此输入以搜索">${ic('mag',18)}</div>${q('brackets','全屏')}${q('chevup','折叠')}${q('help','帮助')}${q('bang','通知')}</div></div>`}
});

/* ---------- ribbon ---------- */
def('nx-group',class extends Nx{
  css(){return `:host{display:flex;flex-direction:column;flex:none;width:var(--group-w);height:84px;margin:5px 0 4px;border-right:1px solid #d9d9d9}
  .c{flex:1;min-height:0;display:flex;align-items:flex-start;padding-left:var(--group-pad,5px)}
  .f{display:flex;align-items:center;height:16px;margin-bottom:-3px;padding-right:8px;color:#005f87}
  .f span{flex:1;text-align:center}
  .f nx-caret{color:#111}`}
  html(){return `<div class="c"><slot></slot></div><div class="f"><span>${this.a('label')}</span><nx-caret></nx-caret></div>`}
});
def('nx-big',class extends Nx{
  css(){return `:host{display:block;flex:none;min-width:var(--tool-w,43px)}
  button{display:flex;flex-direction:column;align-items:center;width:100%;padding:0 4px;white-space:nowrap}
  span{margin-top:4px}nx-caret{margin-top:4px;color:#111}`}
  html(){return `<button>${ic(this.a('icon'),32)}<span><slot></slot></span>${this.hasAttribute('menu')?'<nx-caret></nx-caret>':''}</button>`}
});
def('nx-small',class extends Nx{
  css(){return `:host{display:block}button{display:flex;align-items:center;gap:4px;white-space:nowrap}:host([off]){color:#bdbdbd}`}
  html(){return `<button${this.hasAttribute('off')?' disabled':''}>${ic(this.a('icon'))}<slot></slot></button>`}
});
def('nx-ribbon',class extends Nx{
  css(){return `:host{display:flex;height:94px;border-bottom:1px solid #d9d9d9;background:#fff;color:#222}
  .lay{display:grid;grid-template-columns:repeat(3,15px);gap:8px 10px;margin-left:14px}
  .op{display:grid;grid-template-columns:auto auto;gap:11px 9px;margin:4px 0 0 8px}
  .sc{display:flex;flex-direction:column;align-items:center;gap:4px;margin:5px 0 0 9px}
  .sc input{width:60px;height:22px;border:1px solid #666;padding:0 1px;font:inherit;color:inherit}
  .col{display:flex;flex-direction:column;gap:7px}
  .wl{display:flex;align-items:center;gap:4px;margin-top:-2px;white-space:nowrap}
  .nav{gap:7px}
  .end{flex:1;display:flex;align-items:flex-end;justify-content:flex-end;padding:0 6px 9px}`}
  html(){const B=(i,t,m='',w='')=>`<nx-big icon="${i}"${m?' menu':''}${w?` style="--tool-w:${w}px"`:''}>${t}</nx-big>`,S=(i,t,o='')=>`<nx-small icon="${i}"${o?' off':''}>${t}</nx-small>`;
  return `<nx-group label="窗口" style="--group-w:145px;--group-pad:8px">${B('bigwin','窗口',1)}<div class="lay">${[0,1,2,3,4,5,6,7,8].map(i=>`<button aria-label="布局 ${i+1}">${ic('w'+i)}</button>`).join('')}</div></nx-group>
  <nx-group label="操作" style="--group-w:223px;--group-pad:4px">
   <div class="op">${S('fit','适合窗口')}${S('zoom','缩放')}${S('pan','平移')}${S('rot','旋转')}</div>
   <div class="sc"><input id="sc" value="0.0129"><label for="sc">比例</label></div></nx-group>
  <nx-group label="导航" style="--group-w:193px;--group-pad:12px"><div class="col" style="width:73px">${S('plane','漫游')}${S('saveview','保存主页',1)}${S('restview','恢复主页',1)}</div><div class="col">${S('planesel','漫游至所选对象',1)}${S('pansel','平移至所选对象')}${S('navopt','选项')}</div></nx-group>
  <nx-group label="内容" style="--group-w:280px;--group-pad:8px">${B('showhide','显示和隐藏')}${B('hidebolt','立即隐藏')}${B('editsec','编辑截面',1)}${B('clipsec','剪切截面')}${B('showhide','更多',1,56)}</nx-group>
  <nx-group label="层" style="--group-w:152px;--group-pad:12px"><div class="col">${S('layerset','图层设置')}${S('layermove','移动至图层')}<div class="wl"><span>工作层</span><nx-combo label="工作层" value="1" style="--combo-w:48px"></nx-combo></div></div>${B('layers','更多',1,62)}</nx-group>
  <nx-group label="显示" style="--group-w:347px">${B('persp','透视','',46)}${B('style','样式',1,46)}${B('gold','全局表面处理',1)}${B('bg','背景',1,46)}${B('emph','着重',1)}${B('effect','效果',1)}${B('bulb','更多',1)}</nx-group>
  <nx-group label="对象" style="--group-w:89px">${B('brush','编辑对象显示','',78)}</nx-group>
  <nx-group label="沉浸式" style="--group-w:205px">${B('vr','登录 VR','',52)}${B('vrs','协同虚拟现实',1,80)}${B('vrgear','VR 首选项','',64)}</nx-group>
  <nx-group label="Omniverse" style="--group-w:79px;--group-pad:2px">${B('omni','<div style="text-align:center">导出至<br>Omniverse</div>','',78)}</nx-group>
  <div class="end"><nx-caret></nx-caret></div>`}
});

/* ---------- selection bar ---------- */
def('nx-toolbar',class extends Nx{
  css(){return `:host{display:flex;align-items:center;height:34px;border-bottom:1px solid #a3a3a3;background:#fff;color:#333}
  i{width:1px;height:26px;background:#d3d3d3;flex:none}
  .m{display:flex;align-items:center;gap:8px;padding:0 9px 0 14px}
  u{text-underline-offset:2px}
  nx-combo{flex:none;color:#1a1a1a}
  .b{display:flex;align-items:center;gap:9px}
  .b1{padding:0 10px 0 7px}.b2{padding:0 10px 0 12px}
  .b1 button:first-child{padding:3px 4px;background:#cde6ea;margin-right:-4px}
  .b1 nx-caret{margin:0 -1px 0 -4px}
  .b1 nx-caret.wide{margin:0 2px 0 0}
  .dim{opacity:.45}.end{flex:1;display:flex;justify-content:flex-end;padding:12px 6px 0}`}
  html(){const b=(n,c='')=>`<button aria-label="${n}" class="${c}">${ic(n)}</button>`;
  return `<button class="m">${ic('burger')}<span>菜单(<u>M</u>)</span><nx-caret></nx-caret></button><i></i>
  <nx-combo label="选择过滤器" value="无选择过滤器" style="--combo-w:149px;margin-left:11px"></nx-combo>
  <button aria-label="重置过滤器" class="dim" style="margin:0 8px">${ic('filtundo')}</button>
  <nx-combo label="选择范围" value="整个装配" style="--combo-w:156px"></nx-combo>
  <div class="b b1">${b('asm')}${b('link','dim')}${b('filtlist')}<nx-caret></nx-caret>${b('selundo')}${b('cubesel')}${b('rectsel')}<nx-caret class="wide"></nx-caret>${b('cubea')}${b('cubeb')}</div><i></i>
  <div class="b b2">${'circle eyebr eyeoff rollcopy cylwr curve treehide line plus star'.split(' ').map(n=>b(n)).join('')}</div><i></i><div class="end"><nx-caret></nx-caret></div>`}
});

/* ---------- resource rail ---------- */
def('nx-rail',class extends Nx{
  css(){return `:host{display:block;width:32px;background:#dbdbdb;border-right:1px solid #a0a0a0;color:#444;flex:none}
  .g{display:block;margin:6px 0 22px 8px}
  li{display:flex;height:42px;align-items:center;justify-content:flex-end;padding-right:1px}
  li.on{margin:-2px -1px -2px 2px;height:46px;background:#fff;border:1px solid #a0a0a0;border-right:0;padding-right:2px}
  li.gap{margin-top:12px}`}
  html(){return `<button class="g" aria-label="设置">${ic('gear')}</button><ul>${'rasm rcon *flange books rpmi rmeas +rinfo +rweb +clock rwand rwand2 rtools'.split(' ').map(n=>`<li class="${n[0]==='*'?'on':n[0]==='+'?'gap':''}"><button aria-label="资源">${ic(n.replace(/^[*+]/,''))}</button></li>`).join('')}</ul>`}
});

/* ---------- part navigator ---------- */
const ROWS=[['tclock','历史记录建模模式',0],['tview','模型视图',0,'+'],['tcheck tcam','摄像机',0,'+'],['tball thist','模型历史记录',0,'-'],
['tcsys','基准坐标系 (0)'],['tline','直线 (1)'],['tspl','样条 (51)'],['tspl','样条 (52)'],['tspl','样条 (53)',1,'sel'],['tspl','样条 (54)'],
['trev','旋转 (55)'],['trev','旋转 (56)'],['trev','旋转 (57)'],['trev','旋转 (58)'],
['tthk','加厚 (59)'],['tthk','加厚 (60)'],['tthk','加厚 (61)'],['tblend','边倒圆 (62)'],['tblend','边倒圆 (63)'],['tblend','边倒圆 (64)'],
['text','抽取面 (65)'],['text','抽取面 (66)'],['text','抽取面 (67)'],['tpat','阵列几何特征 [圆形] ...'],['tpat','阵列几何特征 [圆形] ...'],['tpat','阵列几何特征 [圆形] ...'],
['tsk','草图 (75) "SKETCH_...'],['tspl','样条 (88)'],['tsk','草图 (90) "SKETCH_...'],['tsk','草图 (91) "SKETCH_...'],['tsweep','扫掠面 (92)']];
def('nx-navigator',class extends Nx{
  css(){return `:host{display:flex;flex-direction:column;width:326px;flex:none;background:#fff;border-right:1px solid #a0a0a0;padding:0 9px 6px 6px;font-size:12px}
  header{display:flex;height:28px;align-items:center;justify-content:space-between;padding:2px 5px 0 4px}
  h2{font-size:12px;font-weight:400;margin:0}
  .box{flex:1;min-height:0;display:flex;flex-direction:column;border:1px solid #d4d4d4;padding:1px}
  .clip{flex:1;overflow:hidden;margin-bottom:1px}
  table{border-collapse:separate;border-spacing:0;table-layout:fixed;width:100%}
  th{height:21px;background:#efefef;font-weight:400;text-align:left;padding:2px 0 0 6px;border-right:1px solid #c8c8c8;border-bottom:1px solid #c8c8c8;line-height:16px}
  th:nth-child(2),th:nth-child(3){text-align:center;padding:2px 0 0}
  th:last-child,td:last-child{border-right:0}
  th svg{margin-left:14px;vertical-align:1px}
  td{height:20px;padding:0;border-right:1px solid #e6e6e6;border-bottom:1px solid #e6e6e6;line-height:16px}
  tr:nth-child(even) td{background:#f9f9f9}
  td nx-icon{margin:auto;width:16px}
  .n{display:flex;height:19px;align-items:center;white-space:nowrap;overflow:hidden}
  .n nx-icon{margin:0}
  .n .g+nx-icon{margin-right:1px}
  .g{width:19px;height:20px;flex:none;display:grid;place-items:center start;background:repeating-linear-gradient(90deg,#999 0 1px,transparent 1px 2px) 9px 10px/9px 1px no-repeat,repeating-linear-gradient(#999 0 1px,transparent 1px 2px) 9px 0/1px 20px no-repeat}
  .first .g{background-position:9px 10px,9px 10px}
  .last .g{background-size:9px 1px,1px 10px}
  .g b{display:block;width:9px;height:9px;margin-left:5px;border:1px solid #bbb;background:linear-gradient(#222,#222) 1px 3px/5px 1px no-repeat,#fff}
  .g b.p{background:linear-gradient(#222,#222) 1px 3px/5px 1px no-repeat,linear-gradient(#222,#222) 3px 1px/1px 5px no-repeat,#fff}
  .d .g{margin-left:19px}
  .t{padding-left:2px}
  .d .t{flex:1;height:20px;line-height:19px}
  .mag{color:#d23bd2}.cy{color:#1fb0ee}
  tr.sel td:not(:first-child),tr.sel .t{background:#cde6ea}
  tr.sel .t,tr.sel td:not(:first-child){border-top:1px dotted #111;border-bottom:1px dotted #111}
  tr.sel .t{border-left:1px dotted #111;padding-left:1px;line-height:17px;height:19px}
  .bold{font-weight:700}
  .sb{height:16px;background:#efefef;display:flex;align-items:center;padding:0 51px 0 17px}
  .sb i{flex:1;height:2px;background:#858585}
  .split{height:5px;background:#dadada;border:1px solid #a5a5a5;margin-top:1px}
  details{height:24px;border-bottom:2px solid #d0d0d0;color:#005f87;font-size:14px}
  summary{display:flex;align-items:center;gap:9px;height:24px;padding:2px 0 0 10px;list-style:none}`}
  html(){
    const row=([icons,t,lv=1,x],i)=>{
      const cls=[lv?'d':'',i===0?'first':'',(i===3||i===30)?'last':'',x==='sel'?'sel':''].join(' ');
      const tc=t.includes('(52)')?'mag':t.includes('(57)')?'cy':i===30?'bold':'';
      const list=(lv?(i===30?'teyewarn ':'eye '):'')+icons;
      return `<tr class="${cls}"><td><div class="n"><span class="g">${x==='+'?'<b class="p"></b>':x==='-'?'<b></b>':''}</span>${list.split(' ').map(n=>ic(n)).join('')}<span class="t ${tc}">${t}</span></div></td><td>${i===30?ic('tdep'):''}</td><td>${i>2?ic('tcheck'):''}</td><td></td></tr>`};
    return `<header><h2>部件导航器</h2>${ic('square')}</header>
    <div class="box"><div class="clip"><table><colgroup><col><col style="width:24px"><col style="width:24px"><col style="width:58px"></colgroup>
    <thead><tr><th>名称 <svg width="10" height="6"><path d="M0 6L5 0l5 6z" fill="#111"/></svg></th><th>当</th><th>最</th><th>附注</th></tr></thead>
    <tbody>${ROWS.map(row).join('')}${'<tr><td></td><td></td><td></td><td></td></tr>'.repeat(5)}</tbody></table></div><div class="sb"><i></i></div></div>
    <div class="split"></div>${['搜索','相关性','细节','预览'].map(s=>`<details><summary><svg width="5" height="9"><path d="M0 0l5 4.500L0 9z" fill="#005f87"/></svg>${s}</summary></details>`).join('')}`}
});

/* ---------- graphics window ---------- */
def('nx-viewport',class extends Nx{
  css(){return `:host{display:flex;flex-direction:column;flex:1;min-width:0}
  .tabs{display:flex;height:27px;border-bottom:2px solid #005f87}
  .tab{display:flex;align-items:center;gap:5px;background:#005f87;color:#fff;padding:0 5px 0 6px;font-size:12px}
  .v{position:relative;flex:1;border-left:1px solid #d0d0d0;border-right:1px solid #d0d0d0;background:#fff}
  .triad{position:absolute;left:31px;bottom:31px}
  .tip{position:absolute;left:233px;bottom:62px;border:1px solid #555;background:#ffffe1;font-size:12px;line-height:18px;padding:0 2px;color:#111;margin:0;height:21px}
  .sl{position:absolute;right:1px;top:85px;width:9px;height:60px;background:#f4f4f4;box-shadow:0 0 4px #eee;display:flex;align-items:flex-end;justify-content:center}
  .sl i{width:7px;height:6px;background:#1eaaf0;border-radius:0 0 4px 4px;margin-bottom:2px}`}
  html(){return `<div class="tabs"><div class="tab">${ic('flange',15)}<span>玫瑰花.prt</span><button aria-label="固定">${ic('tabdoc')}</button><button aria-label="关闭">${ic('tabx')}</button></div></div>
  <div class="v"><svg class="triad" width="135" height="120" font-family="Liberation Sans,sans-serif" font-size="12">
  <path d="M72 7.500L46.500 22 45 59l33 13 26-14.500 1.500-37zM72 7.500L70.500 45 45 59M70.500 45L104 57.500" fill="none" stroke="#b4b4b4"/>
  <path d="M59 33L32 24" stroke="#0a3fe0" stroke-width="5" stroke-linecap="round"/><path d="M17 18l18 1.500L31 29z" fill="#0a3fe0"/>
  <path d="M87.500 33L108 22" stroke="#1f6f24" stroke-width="5" stroke-linecap="round"/><path d="M119 16l-15 1.500 5 9z" fill="#1f6f24"/>
  <path d="M74 58l-1 30" stroke="#ef4848" stroke-width="5"/><path d="M68 87h10l-5.500 19z" fill="#e03434"/>
  <text x="6" y="19" fill="#4a5ce0">Z</text><text x="121" y="17" fill="#3d8b40">Y</text><text x="68" y="118" fill="#cc3333">X</text></svg>
  <p class="tip">关闭</p><div class="sl"><i></i></div></div>`}
});

/* ---------- status line ---------- */
def('nx-status',class extends Nx{
  css(){return `:host{display:grid;grid-template-columns:49% 1fr auto;align-items:center;height:24px;border-top:1px solid #a3a3a3;border-bottom:1px solid #005f87;box-shadow:inset 0 -1px #b5b5b5;background:#fff;font-weight:700;padding:0 5px 2px 3px}
  span+span{margin-left:-5px}
  .w{font:300 16px/20px "Noto Sans CJK SC",sans-serif;color:#444;white-space:pre}
  code{font:13px/20px "Liberation Mono",monospace}`}
  html(){return `<span>选择对象并使用 MB3，或者双击某一对象</span><span>总计 1</span><span class="w"><code>UG</code>爱好者论坛<code> WWW.UGSNX.COM</code></span>`}
});
def('nx-app',class extends Nx{
  css(){return `:host{display:flex;flex-direction:column;height:100vh}main{display:flex;flex:1;min-height:0}`}
  html(){return `<nx-header></nx-header><nx-ribbon></nx-ribbon><nx-toolbar></nx-toolbar><main><nx-rail></nx-rail><nx-navigator></nx-navigator><nx-viewport></nx-viewport></main><nx-status></nx-status>`}
});
</script>
</body>
</html>
